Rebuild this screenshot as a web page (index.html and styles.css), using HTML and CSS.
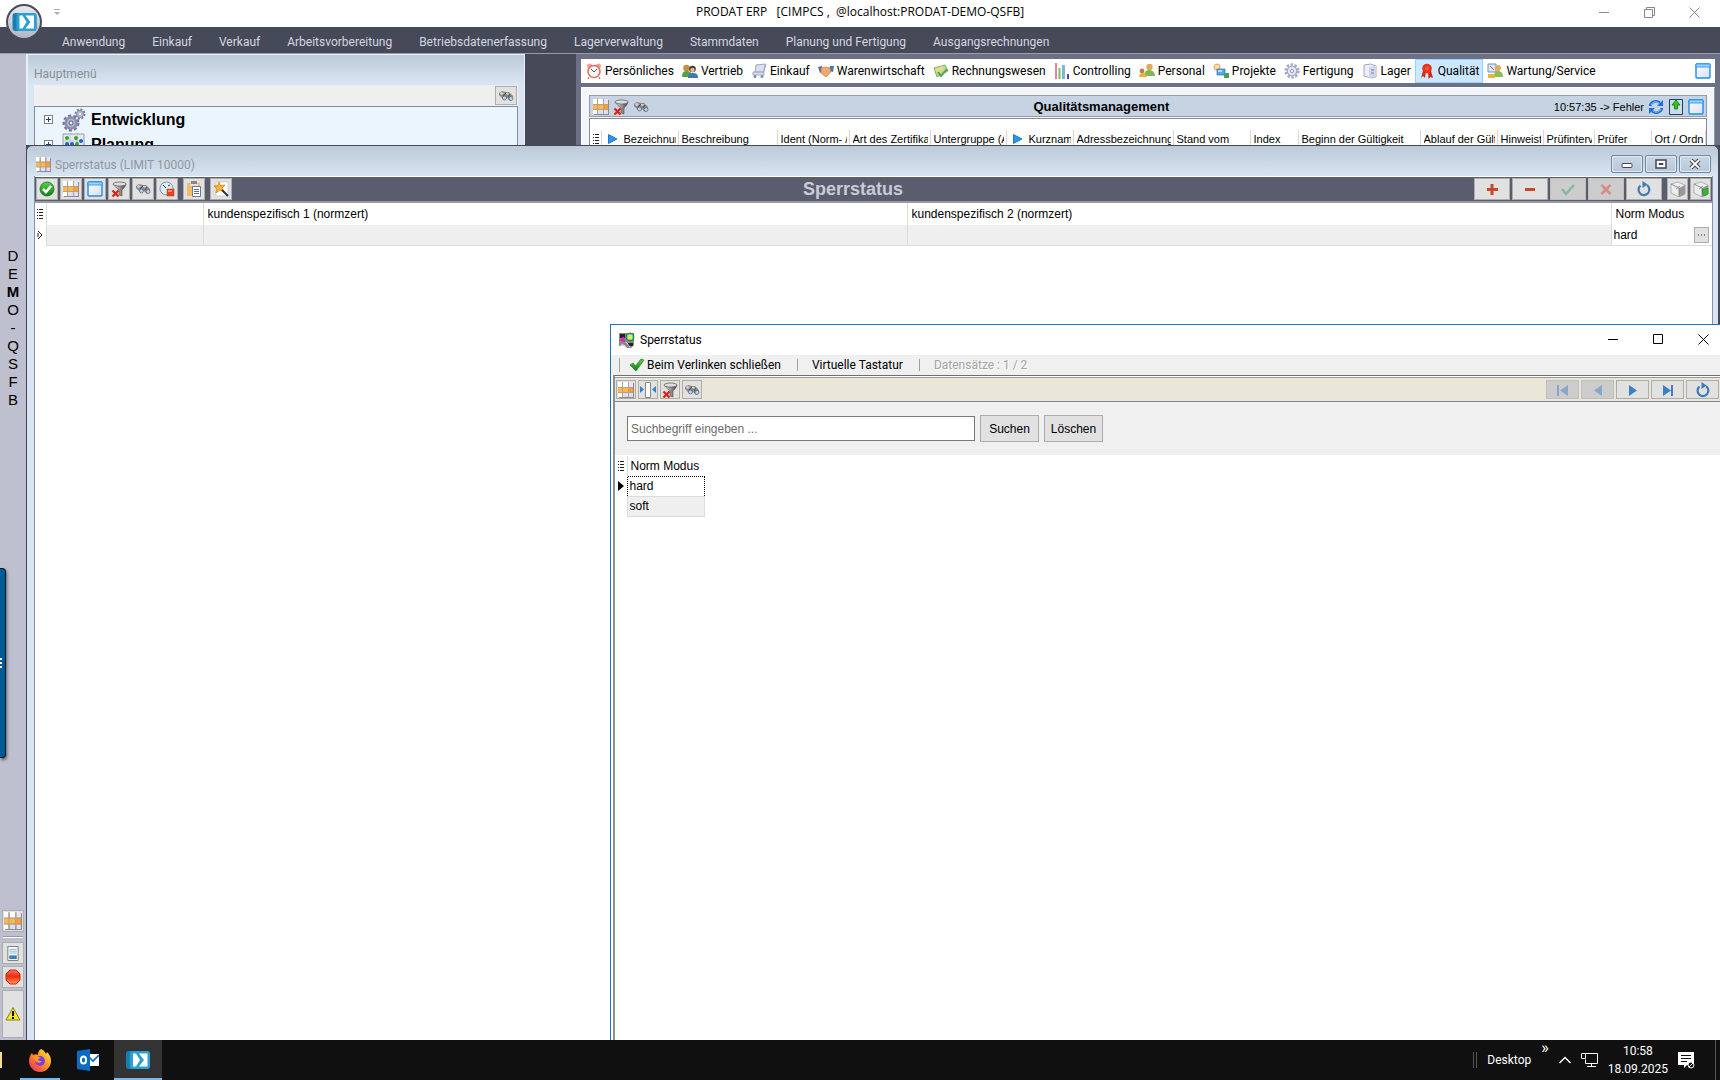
FILE: index.html
```html
<!DOCTYPE html>
<html lang="de">
<head>
  <meta charset="UTF-8">
  <title>PRODAT ERP</title>
  <link rel="stylesheet" href="styles.css">
</head>
<body>

  <!-- Icons -->
  <svg class="sprite" width="0" height="0" aria-hidden="true">
    <defs>
      <linearGradient id="g-green" x1="0" y1="0" x2="0" y2="1"><stop offset="0" stop-color="#5fd04c"/><stop offset="1" stop-color="#0b7d10"/></linearGradient>
      <linearGradient id="g-red" x1="0" y1="0" x2="0" y2="1"><stop offset="0" stop-color="#f77"/><stop offset=".45" stop-color="#f02a08"/><stop offset="1" stop-color="#ff9a70"/></linearGradient>
      <linearGradient id="g-win" x1="0" y1="0" x2="1" y2="1"><stop offset="0" stop-color="#fff"/><stop offset="1" stop-color="#d9dcfb"/></linearGradient>
      <linearGradient id="g-metal" x1="0" y1="0" x2="1" y2="0"><stop offset="0" stop-color="#eee"/><stop offset="1" stop-color="#444"/></linearGradient>
      <linearGradient id="g-fox" x1="1" y1="0" x2="0" y2="1"><stop offset="0" stop-color="#fff14a"/><stop offset=".5" stop-color="#ff8a1c"/><stop offset="1" stop-color="#f0206c"/></linearGradient>
    </defs>
    <symbol id="i-grid" viewBox="0 0 16 16">
      <path fill="#8d8a92" d="M1 1h15v15H1z"/>
      <path fill="#fff" d="M0 0h4v5H0zM5 0h5v5H5z"/><path fill="#e4e4fb" d="M11 0h4v5h-4z"/>
      <path fill="#ffb84d" d="M0 5h10v6H0z"/><path fill="#ff9d2e" d="M10 5h5v6h-5z"/>
      <path fill="#fff" d="M0 11h4v4H0z"/><path fill="#dedefa" d="M5 11h5v4H5zM11 11h4v4h-4z"/>
      <path fill="#b5a184" d="M0 5h15v1H0zM0 10h15v1H0zM4 0h1v15H4zM10 0h1v15h-1z"/>
    </symbol>
    <symbol id="i-filter" viewBox="0 0 16 16">
      <path fill="url(#g-metal)" stroke="#555" stroke-width=".6" d="M2 3c1 2 5 5 6 6v5l3 1V9c2-2 3-3 4-6z"/><ellipse cx="8.500" cy="3" rx="6.500" ry="2" fill="#ddd" stroke="#555" stroke-width=".7"/>
      <path stroke="#e2200c" stroke-width="2.200" d="M1.500 9.500l6 6M7.500 9.500l-6 6"/>
    </symbol>
    <symbol id="i-bino" viewBox="0 0 16 16">
      <path fill="#888" d="M1 5l3-2 4 1 3 0 4 4 0 3-3 2-3-3-3 2-3-3-2-2z"/><path fill="#d5d5d5" d="M3 4l3 1-2 2-2-1zM8 5l3 0-1 2-2-1z"/>
      <path stroke="#444" fill="none" stroke-width=".8" d="M5 8l3-3M10 9l2-3"/>
      <circle cx="6.500" cy="10" r="2" fill="#b5d3ee" stroke="#4c5864" stroke-width=".6"/><circle cx="13" cy="10.500" r="2" fill="#b5d3ee" stroke="#4c5864" stroke-width=".6"/>
    </symbol>
    <symbol id="i-window" viewBox="0 0 16 16">
      <rect x="1" y="1" width="14" height="14" rx="1" fill="url(#g-win)" stroke="#1a90ee" stroke-width="1.400"/><path fill="#9bd4fa" stroke="#1a90ee" stroke-width=".8" d="M1 1h14v3H1z"/>
    </symbol>
    <symbol id="i-ok" viewBox="0 0 16 16">
      <circle cx="8" cy="8" r="7" fill="url(#g-green)" stroke="#0a7a0f" stroke-width=".8"/><path fill="none" stroke="#fff" stroke-width="2.600" d="M4 8l3 3 5-6"/>
    </symbol>
    <symbol id="i-stop" viewBox="0 0 16 16">
      <circle cx="7.500" cy="7.500" r="6.500" fill="#dcecf8" stroke="#7b99b4"/><path stroke="#333" fill="none" d="M4 4l3 3M9 5l2-1"/><path fill="#e8461a" stroke="#b53a10" stroke-width=".5" d="M8 8h7v7H8z"/><path fill="#ff8d5e" d="M9 9h4v2H9z"/>
    </symbol>
    <symbol id="i-paste" viewBox="0 0 16 16">
      <path fill="#f2bd67" d="M1 2h13v13H1z"/><path fill="#e0e0e0" d="M4 3h8v2H4z"/><path fill="#888" d="M5 0h6v3H5z"/><path fill="#fff" stroke="#777" d="M6.500 5.500h8v10h-8z"/><path stroke="#4178ad" d="M8 8.500h5M8 10.500h5M8 12.500h5"/>
    </symbol>
    <symbol id="i-wand" viewBox="0 0 16 16">
      <path fill="#fff" stroke="#b9c4de" stroke-width=".7" d="M3 1h12v14H3z"/><path fill="#ffb52a" stroke="#d07508" stroke-width=".7" d="M6 1l1.500 3.500L12 4 9 7l2 4-4-2-4 3 1-4-3-3 4-.4z"/><path stroke="#333" stroke-width="2" d="M9 9l6 6"/>
    </symbol>
    <symbol id="i-plus" viewBox="0 0 16 16"><path stroke="#c9472b" stroke-width="3" d="M8 3v11M3 8.500h11"/></symbol>
    <symbol id="i-minus" viewBox="0 0 16 16"><path stroke="#c9472b" stroke-width="3" d="M3 8.500h10"/></symbol>
    <symbol id="i-check" viewBox="0 0 16 16"><path fill="none" stroke="#86b7a0" stroke-width="2.400" d="M2 8l4 5 8-9"/></symbol>
    <symbol id="i-cross" viewBox="0 0 16 16"><path stroke="#d78e82" stroke-width="2.600" d="M3.500 4l9 9M12.500 4l-9 9"/></symbol>
    <symbol id="i-reload" viewBox="0 0 16 16"><path fill="none" stroke="#3f7ab5" stroke-width="2.200" d="M11 4.200a5.400 5.400 0 1 1-6.500.3"/><path fill="#3f7ab5" d="M6.500 0l5 3.500-5 3.500z"/></symbol>
    <symbol id="i-box" viewBox="0 0 16 16"><path fill="#eee" stroke="#999" stroke-width=".7" d="M1 3l7-2 7 3v9l-6 3-8-4z"/><path fill="#999" d="M9 7l6-3v9l-6 3z"/><path fill="none" stroke="#777" stroke-width=".8" d="M1 3l8 4v9M6 8l4-3"/></symbol>
    <symbol id="i-first" viewBox="0 0 16 16"><path fill="currentColor" d="M2 3h2v11H2zM13 3v11L5 8.500z"/></symbol>
    <symbol id="i-prev" viewBox="0 0 16 16"><path fill="currentColor" d="M12 3v11L4 8.500z"/></symbol>
    <symbol id="i-next" viewBox="0 0 16 16"><path fill="currentColor" d="M4 3v11l8-5.500z"/></symbol>
    <symbol id="i-last" viewBox="0 0 16 16"><path fill="currentColor" d="M11 3h2v11h-2zM3 3v11l8-5.500z"/></symbol>
    <symbol id="i-fit" viewBox="0 0 16 16"><path fill="#fff" stroke="#888" d="M5.500.5h5v15h-5z"/><path fill="#3f7fc1" d="M0 4v7l4-3.500zM16 4v7l-4-3.500z"/></symbol>
    <symbol id="i-lines" viewBox="0 0 6 10"><path stroke="#222" d="M2 .5h4M2 3.500h4M2 6.500h4M2 9.500h4"/><path stroke="#222" d="M0 .5h1M0 3.500h1M0 6.500h1M0 9.500h1"/></symbol>
    <symbol id="i-clock" viewBox="0 0 16 16"><circle cx="3.500" cy="3" r="2.500" fill="#f0a195"/><circle cx="12.500" cy="3" r="2.500" fill="#f0a195"/><circle cx="8" cy="8.500" r="6" fill="#f5f8fb" stroke="#e4705a" stroke-width="1.600"/><path fill="none" stroke="#555" d="M5 6l3 3 3-3"/><path stroke="#c44" d="M3 14l-1 2M13 14l1 2"/></symbol>
    <symbol id="i-people" viewBox="0 0 16 16"><circle cx="4.500" cy="5" r="3.300" fill="#c78f45"/><path fill="#5aa044" d="M0 14c0-5 2-6 5-6s5 2 5 6z"/><circle cx="10.500" cy="6" r="3.300" fill="#453a35"/><circle cx="10.500" cy="7" r="2.200" fill="#eab67c"/><path fill="#3b78bd" d="M6 15c0-4 2-5 5-5s5 1 5 5z"/></symbol>
    <symbol id="i-cart" viewBox="0 0 16 16"><path fill="#dcdff0" stroke="#a3a7c0" d="M5 2l9-1-1 8H4zM2 9h11v3H2z"/><path stroke="#a3a7c0" d="M13 8l2-7"/><circle cx="4" cy="13.500" r="1.500" fill="#8589a2"/><circle cx="11" cy="13.500" r="1.500" fill="#8589a2"/></symbol>
    <symbol id="i-hands" viewBox="0 0 16 16"><path fill="#5c7085" d="M0 4l4-1 1 5-3 2z"/><path fill="#3f78c0" d="M16 3l-4 0-1 5 4 1z"/><path fill="#f0a970" stroke="#c0723d" stroke-width=".6" d="M3 5l4-1 5 1 1 4-5 5-5-4z"/></symbol>
    <symbol id="i-money" viewBox="0 0 16 16"><path fill="#b4dc92" stroke="#5c9a48" stroke-width=".7" d="M1 5l11-3 3 6-11 6z"/><path fill="#e9d98c" d="M2 6l7-3 2 3-7 4z"/><path stroke="#4da34b" stroke-width="1.800" fill="none" d="M5 9l3 4 6-7"/></symbol>
    <symbol id="i-bars" viewBox="0 0 16 16"><path stroke="#e88496" stroke-width="2" d="M2 0v16"/><path stroke="#6bc46b" stroke-width="2" d="M5.500 5v11"/><path stroke="#7fb8cf" stroke-width="3" d="M9.500 2v14"/><path stroke="#4a44c0" stroke-width="2" d="M14 11v5"/></symbol>
    <symbol id="i-person" viewBox="0 0 16 16"><circle cx="10.500" cy="4" r="3.200" fill="#e3aa5c"/><path fill="#7dba55" d="M5 13c0-4 2-6 5-6s6 2 6 6z"/><circle cx="3" cy="8" r="2.400" fill="#c47d3b"/><path fill="#e5b23a" d="M0 14c0-3 2-4 4-4s4 1 4 4z"/></symbol>
    <symbol id="i-project" viewBox="0 0 16 16"><circle cx="4" cy="4" r="3.500" fill="#f4a88b"/><path fill="#fbe48a" d="M2 2h4v4H2z"/><path fill="#58a8e8" stroke="#2c6eb4" stroke-width=".7" d="M4 6h8v6H4z"/><path fill="#4aa053" d="M11 10h5v5h-5z"/><path fill="#b3e0ff" d="M5 7h4v2H5z"/></symbol>
    <symbol id="i-gear" viewBox="0 0 16 16"><circle cx="8" cy="8" r="6.400" fill="none" stroke="#a9acc6" stroke-width="2.500" stroke-dasharray="2.500 1.500"/><circle cx="8" cy="8" r="4.800" fill="#e4e6f3" stroke="#a3a7c2" stroke-width="1.200"/><circle cx="8" cy="8" r="1.600" fill="#fff" stroke="#9295b0"/></symbol>
    <symbol id="i-store" viewBox="0 0 16 16"><path fill="#eeeffa" stroke="#a5a8c5" d="M2 2l7-1 5 2v11l-5 1-7-2z"/><path fill="#d2d5ea" d="M7 4l7-1v11l-7 1z"/><path stroke="#7c80a0" d="M9 7h3M9 10h3"/></symbol>
    <symbol id="i-ribbon" viewBox="0 0 16 16"><path fill="#cf2a12" d="M4 8h3l-1 7-2-2-2 2zM9 8h3l2 7-2.500-1L9.500 16z"/><circle cx="8" cy="5.500" r="4.800" fill="#e83317"/><circle cx="8" cy="5.500" r="2" fill="#f2593d"/></symbol>
    <symbol id="i-service" viewBox="0 0 16 16"><path fill="#d7e9f8" stroke="#6e93b8" d="M1 1h8v8H1z"/><path stroke="#d4453a" d="M3 3l4 4"/><circle cx="11" cy="5" r="3" fill="#e3aa5c"/><path fill="#8bbc59" d="M7 14c0-4 1-6 4-6s5 2 5 6z"/><path fill="#e8b43b" d="M1 11h7v4H1z"/></symbol>
    <symbol id="i-sync" viewBox="0 0 16 16"><path fill="none" stroke="#1b6fd8" stroke-width="2.600" d="M2 7a6 6 0 0 1 10-3M14 9a6 6 0 0 1-10 3"/><path fill="#1b6fd8" d="M15 1v6H9zM1 15V9h6z"/><path fill="none" stroke="#9bd0fb" stroke-width=".8" d="M3 6a5 5 0 0 1 8-2M13 10a5 5 0 0 1-8 2"/></symbol>
    <symbol id="i-up" viewBox="0 0 16 16"><path fill="#c8dfe5" stroke="#1c3f78" d="M1.500.5h13v15h-13z"/><path fill="#35c614" stroke="#0c720c" stroke-width=".8" d="M8 1l4 5H9.500v4h-3V6H4z"/></symbol>
    <symbol id="i-tri" viewBox="0 0 10 10"><path fill="#2297f5" stroke="#0e62bd" stroke-width=".8" d="M.5.5L9 5 .5 9.500z"/></symbol>
    <symbol id="i-gears" viewBox="0 0 24 24"><circle cx="9" cy="15" r="7" fill="none" stroke="#77789b" stroke-width="3" stroke-dasharray="3 2"/><circle cx="9" cy="15" r="5.500" fill="#b2b3cf" stroke="#8e8fb0" stroke-width="2.500"/><circle cx="9" cy="15" r="2" fill="#ebf5fe" stroke="#5d5e80"/><circle cx="18" cy="6" r="4.500" fill="none" stroke="#77789b" stroke-width="2" stroke-dasharray="2 1.500"/><circle cx="18" cy="6" r="3.600" fill="#b2b3cf" stroke="#8e8fb0"/><circle cx="18" cy="6" r="1.200" fill="#ebf5fe"/></symbol>
    <symbol id="i-plan" viewBox="0 0 24 24"><path fill="#e9e9f4" stroke="#9a9ab3" d="M1 1h21v21H1z"/><path stroke="#c2c2d5" d="M8 1v21M15 1v21M1 8h21M1 15h21"/><circle cx="5" cy="5" r="2" fill="#2eab22"/><circle cx="14" cy="5" r="2" fill="#2eab22"/><circle cx="19" cy="8" r="2" fill="#1c62c9"/><circle cx="5" cy="11" r="2" fill="#1c62c9"/><circle cx="10" cy="11" r="2" fill="#1c62c9"/><circle cx="15" cy="11" r="2" fill="#2eab22"/></symbol>
    <symbol id="i-prodat" viewBox="0 0 24 20"><rect x="0" y="1" width="24" height="18" rx="3" fill="#1680b4"/><rect x="4" y="1" width="20" height="18" rx="3" fill="#2ba0d2"/><path fill="#fff" d="M7 3.500h3l4 6.500-4 6.500H7zM13 3.500h8.500v13H13l5-6.500z"/></symbol>
    <symbol id="i-tick" viewBox="0 0 16 14"><path fill="url(#g-green)" stroke="#18861b" stroke-width=".7" d="M1 7l3-2 2.500 3L12 1l3 1-8 11z"/></symbol>
    <symbol id="i-app" viewBox="0 0 16 16"><path fill="#888" d="M0 1h15v12l-3 3H8l-3-3-5 1z"/><path fill="#222" d="M1 2h5v4H1zM9 11h5v3H9z"/><path stroke="#e21ec6" stroke-width="2" d="M1 8h4M4 5l1 5"/><circle cx="11" cy="5" r="4" fill="#35dfd4" stroke="#4a6b16"/><path fill="#e8ef3b" d="M9 3h4v4H9z"/><path stroke="#ddd" d="M7 10l4 5M2 12l4 2"/></symbol>
    <symbol id="i-doc" viewBox="0 0 16 16"><path fill="#fff" stroke="#777" d="M2.500.5h11v15h-11z"/><path stroke="#88aed0" d="M4 3.500h8M4 5.500h8M4 7.500h8"/><path fill="#3f7fb8" d="M4 10h8v4H4z"/></symbol>
    <symbol id="i-red" viewBox="0 0 16 16"><path fill="url(#g-red)" stroke="#d81d05" d="M5 1h6l4 4v6l-4 4H5l-4-4V5z"/></symbol>
    <symbol id="i-warn" viewBox="0 0 16 16"><path fill="#f3e72a" stroke="#8f7c1c" stroke-linejoin="round" d="M8 1.500l7 12.500H1z"/><path stroke="#111" stroke-width="2" d="M8 5v5M8 11v2"/></symbol>
  </svg>

  <header class="titlebar">
    <button class="quick" aria-label="Schnellzugriff"><svg width="6" height="6" viewBox="0 0 6 6"><path stroke="#aab" d="M0 .5h6"/><path fill="#aab" d="M0 3h6L3 6z"/></svg></button>
    <span class="caption">PRODAT ERP &nbsp; [CIMPCS , &nbsp;@localhost:PRODAT-DEMO-QSFB]</span>
    <div class="win-controls">
      <button aria-label="Minimieren"><svg width="11" height="11"><path stroke="#888" d="M0 5.500h10"/></svg></button>
      <button aria-label="Wiederherstellen"><svg width="11" height="11"><path fill="none" stroke="#888" d="M.5 2.500h8v8h-8zM2.500 2V.5h8v8H9"/></svg></button>
      <button aria-label="Schließen"><svg width="11" height="11"><path stroke="#888" d="M.5.5l10 10M10.500.5l-10 10"/></svg></button>
    </div>
    <button class="app-button" aria-label="PRODAT"><svg width="25" height="20"><use href="#i-prodat"/></svg></button>
  </header>

  <nav class="menubar">
    <a href="#">Anwendung</a>
    <a href="#">Einkauf</a>
    <a href="#">Verkauf</a>
    <a href="#">Arbeitsvorbereitung</a>
    <a href="#">Betriebsdatenerfassung</a>
    <a href="#">Lagerverwaltung</a>
    <a href="#">Stammdaten</a>
    <a href="#">Planung und Fertigung</a>
    <a href="#">Ausgangsrechnungen</a>
  </nav>

  <div class="workspace">
    <aside class="sidebar">
      <div class="mandant"><span>D</span><span>E</span><b>M</b><span>O</span><span>-</span><span>Q</span><span>S</span><span>F</span><span>B</span></div>
      <div class="side-tab"><i></i><i></i><i></i></div>
      <div class="side-buttons">
        <button aria-label="Tabelle"><svg width="18" height="18"><use href="#i-grid"/></svg></button>
        <hr>
        <button aria-label="Protokoll"><svg width="16" height="15"><use href="#i-doc"/></svg></button>
        <button aria-label="Stopp"><svg width="16" height="16"><use href="#i-red"/></svg></button>
        <button class="tall" aria-label="Warnungen"><svg width="16" height="16"><use href="#i-warn"/></svg></button>
      </div>
    </aside>

    <main class="desktop">
      <div class="backdrop">
        <section class="tree-window">
          <h2>Hauptmenü</h2>
          <div class="tree-search"><button aria-label="Suchen"><svg><use href="#i-bino"/></svg></button></div>
          <ul class="tree">
            <li><span class="expander"></span><svg width="24" height="24"><use href="#i-gears"/></svg>Entwicklung</li>
            <li><span class="expander"></span><svg width="24" height="24"><use href="#i-plan"/></svg>Planung</li>
          </ul>
        </section>

        <section class="modules">
          <nav class="module-bar">
            <a href="#"><svg><use href="#i-clock"/></svg>Persönliches</a>
            <a href="#"><svg><use href="#i-people"/></svg>Vertrieb</a>
            <a href="#"><svg><use href="#i-cart"/></svg>Einkauf</a>
            <a href="#"><svg><use href="#i-hands"/></svg>Warenwirtschaft</a>
            <a href="#"><svg><use href="#i-money"/></svg>Rechnungswesen</a>
            <a href="#"><svg><use href="#i-bars"/></svg>Controlling</a>
            <a href="#"><svg><use href="#i-person"/></svg>Personal</a>
            <a href="#"><svg><use href="#i-project"/></svg>Projekte</a>
            <a href="#"><svg><use href="#i-gear"/></svg>Fertigung</a>
            <a href="#"><svg><use href="#i-store"/></svg>Lager</a>
            <a href="#" class="active"><svg><use href="#i-ribbon"/></svg>Qualität</a>
            <a href="#"><svg><use href="#i-service"/></svg>Wartung/Service</a>
            <button aria-label="Fenster"><svg><use href="#i-window"/></svg></button>
          </nav>
          <div class="quality">
            <div class="quality-head">
              <div class="tools">
                <svg><use href="#i-grid"/></svg>
                <svg><use href="#i-filter"/></svg>
                <svg><use href="#i-bino"/></svg>
              </div>
              <h2>Qualitätsmanagement</h2>
              <div class="status">
                <span>10:57:35 -&gt; Fehler</span>
                <svg><use href="#i-sync"/></svg>
                <svg><use href="#i-up"/></svg>
                <svg><use href="#i-window"/></svg>
              </div>
            </div>
            <table class="quality-table">
              <colgroup>
                <col class="q-mark"><col class="q-name"><col class="q-desc"><col class="q-ident"><col class="q-type"><col class="q-group"><col class="q-short"><col class="q-addr"><col class="q-date"><col class="q-index"><col class="q-begin"><col class="q-end"><col class="q-note"><col class="q-interval"><col class="q-tester"><col>
              </colgroup>
              <thead>
                <tr>
                  <th class="mark"><svg width="6" height="10"><use href="#i-lines"/></svg></th>
                  <th><div><svg width="10" height="10"><use href="#i-tri"/></svg>Bezeichnung</div></th>
                  <th><div>Beschreibung</div></th>
                  <th><div>Ident (Norm- /</div></th>
                  <th><div>Art des Zertifikats</div></th>
                  <th><div>Untergruppe (Art)</div></th>
                  <th><div><svg width="10" height="10"><use href="#i-tri"/></svg>Kurzname</div></th>
                  <th><div>Adressbezeichnung</div></th>
                  <th><div>Stand vom</div></th>
                  <th><div>Index</div></th>
                  <th><div>Beginn der Gültigkeit</div></th>
                  <th><div>Ablauf der Gültigkeit</div></th>
                  <th><div>Hinweistext</div></th>
                  <th><div>Prüfintervall</div></th>
                  <th><div>Prüfer</div></th>
                  <th><div>Ort / Ordner</div></th>
                </tr>
              </thead>
            </table>
          </div>
        </section>
      </div>

      <section class="mdi-window">
        <header class="mdi-title">
          <svg width="15" height="15"><use href="#i-grid"/></svg>
          <h2>Sperrstatus (LIMIT 10000)</h2>
          <div class="mdi-controls">
            <button aria-label="Minimieren"><svg width="12" height="10"><rect x="1" y="4.500" width="10" height="4" rx="1" fill="#fff" stroke="#445"/></svg></button>
            <button aria-label="Maximieren"><svg width="12" height="10"><path fill="#fff" stroke="#445" stroke-width="1.500" d="M1 1h10v8H1z"/><path fill="none" stroke="#445" d="M4 4.500h4v1H4z"/></svg></button>
            <button aria-label="Schließen"><svg width="12" height="10"><path stroke="#445" stroke-width="4" d="M2 1l8 8M10 1L2 9"/><path stroke="#fff" stroke-width="1.800" d="M2 1l8 8M10 1L2 9"/></svg></button>
          </div>
        </header>
        <div class="mdi-body">
          <div class="mdi-toolbar">
            <div class="group">
              <button aria-label="Übernehmen"><svg><use href="#i-ok"/></svg></button>
              <button aria-label="Tabelle"><svg><use href="#i-grid"/></svg></button>
              <button aria-label="Fenster"><svg><use href="#i-window"/></svg></button>
              <button aria-label="Filter löschen"><svg><use href="#i-filter"/></svg></button>
              <button aria-label="Suchen"><svg><use href="#i-bino"/></svg></button>
              <button aria-label="Anhalten"><svg><use href="#i-stop"/></svg></button>
              <button class="apart" aria-label="Einfügen"><svg><use href="#i-paste"/></svg></button>
              <button class="apart" aria-label="Assistent"><svg><use href="#i-wand"/></svg></button>
            </div>
            <h1>Sperrstatus</h1>
            <div class="group">
              <button class="wide" aria-label="Neu"><svg><use href="#i-plus"/></svg></button>
              <button class="wide" aria-label="Löschen"><svg><use href="#i-minus"/></svg></button>
              <button class="wide" disabled aria-label="Speichern"><svg><use href="#i-check"/></svg></button>
              <button class="wide" disabled aria-label="Abbrechen"><svg><use href="#i-cross"/></svg></button>
              <button class="wide" aria-label="Aktualisieren"><svg><use href="#i-reload"/></svg></button>
              <button class="narrow apart" aria-label="Export"><svg><use href="#i-box"/></svg></button>
              <button class="narrow" aria-label="Export starten"><svg viewBox="0 0 16 16"><use href="#i-box"/><path fill="#3ab52f" stroke="#1d8a1c" stroke-width=".6" d="M9 9l6-2v6l-4 2z"/></svg></button>
            </div>
          </div>
          <table class="lock-table">
            <colgroup><col class="l-mark"><col class="l-first"><col><col><col class="l-mode"></colgroup>
            <thead>
              <tr>
                <th class="mark"><svg width="6" height="10"><use href="#i-lines"/></svg></th>
                <th></th>
                <th>kundenspezifisch 1 (normzert)</th>
                <th>kundenspezifisch 2 (normzert)</th>
                <th>Norm Modus</th>
              </tr>
            </thead>
            <tbody>
              <tr>
                <td class="mark"><svg width="6" height="10"><path fill="none" stroke="#222" d="M1 1l4 4-4 4M1 3v4"/></svg></td>
                <td></td>
                <td></td>
                <td></td>
                <td class="mode"><div><span>hard</span><button aria-label="Auswählen"><svg width="8" height="2"><path stroke="#222" d="M0 1h1M3 1h1M6 1h1"/></svg></button></div></td>
              </tr>
            </tbody>
          </table>
        </div>
      </section>

      <section class="dialog">
        <header class="dialog-title">
          <svg width="16" height="16"><use href="#i-app"/></svg>
          <h2>Sperrstatus</h2>
          <div class="win-controls">
            <button aria-label="Minimieren"><svg width="11" height="11"><path stroke="#000" d="M0 5.500h10"/></svg></button>
            <button aria-label="Maximieren"><svg width="11" height="11"><path fill="none" stroke="#000" d="M.5.5h9v9h-9z"/></svg></button>
            <button aria-label="Schließen"><svg width="11" height="11"><path stroke="#000" d="M.5.5l10 10M10.500.5l-10 10"/></svg></button>
          </div>
        </header>
        <div class="dialog-menu">
          <button class="link-close"><svg width="16" height="14"><use href="#i-tick"/></svg>Beim Verlinken schließen</button>
          <button>Virtuelle Tastatur</button>
          <span>Datensätze : 1 / 2</span>
        </div>
        <div class="dialog-body">
          <div class="dialog-toolbar">
            <button aria-label="Tabelle"><svg><use href="#i-grid"/></svg></button>
            <button aria-label="Spaltenbreite"><svg><use href="#i-fit"/></svg></button>
            <button aria-label="Filter löschen"><svg><use href="#i-filter"/></svg></button>
            <button aria-label="Suchen"><svg><use href="#i-bino"/></svg></button>
            <div class="pager">
              <button disabled aria-label="Erster"><svg><use href="#i-first"/></svg></button>
              <button disabled aria-label="Vorheriger"><svg><use href="#i-prev"/></svg></button>
              <button aria-label="Nächster"><svg><use href="#i-next"/></svg></button>
              <button aria-label="Letzter"><svg><use href="#i-last"/></svg></button>
              <button aria-label="Aktualisieren"><svg><use href="#i-reload"/></svg></button>
            </div>
          </div>
          <form class="search">
            <input type="text" aria-label="Suchbegriff" placeholder="Suchbegriff eingeben ...">
            <button type="button">Suchen</button>
            <button type="button">Löschen</button>
          </form>
          <table class="mode-table">
            <thead>
              <tr><th class="mark"><svg width="6" height="10"><use href="#i-lines"/></svg></th><th>Norm Modus</th></tr>
            </thead>
            <tbody>
              <tr class="selected"><td class="mark"><svg width="6" height="10"><path d="M0 0l6 5-6 5z"/></svg></td><td>hard</td></tr>
              <tr><td class="mark"></td><td>soft</td></tr>
            </tbody>
          </table>
        </div>
      </section>
    </main>
  </div>

  <footer class="taskbar">
    <div class="pinned">
      <i class="folder"></i>
      <button class="open" aria-label="Firefox"><svg width="24" height="24" viewBox="0 0 24 24"><path fill="url(#g-fox)" d="M13 1c3 1 4 3 5 5l1-2c3 3 4 6 4 9a11 11 0 0 1-22 0c0-3 1-6 3-8l1 2c2-1 4-1 5 0 0-3 1-5 3-6z"/><circle cx="12" cy="13" r="5" fill="#7a3fe0"/><path fill="#ff9a1f" d="M4 9c3-2 6-1 9 1-2 0-3 1-3 2 1 1 2 1 4 1-2 3-6 2-7-1z"/></svg></button>
      <button aria-label="Outlook"><svg width="22" height="22" viewBox="0 0 22 22"><path fill="#fff" d="M12 5h10v12H12z"/><path fill="none" stroke="#0a6cc4" stroke-width="1.600" d="M12 8l4 4 6-6"/><path fill="#0a6cc4" d="M0 2l13-2v22L0 20z"/><ellipse cx="6.500" cy="11" rx="2.600" ry="3.500" fill="none" stroke="#fff" stroke-width="2"/></svg></button>
      <button class="open current" aria-label="PRODAT"><svg width="24" height="20"><use href="#i-prodat"/></svg></button>
    </div>
    <div class="tray">
      <i class="grip"></i>
      <span class="desk">Desktop</span>
      <span class="more">»</span>
      <svg width="12" height="8" viewBox="0 0 12 8"><path fill="none" stroke="#fff" stroke-width="1.400" d="M.5 7L6 1.500 11.500 7"/></svg>
      <svg width="17" height="14" viewBox="0 0 17 14"><path fill="none" stroke="#fff" d="M4.500 2.500V.5h12v10h-12v-4M.5.5h4v5h-4zM10.500 10.500v3M6 13.500h9"/></svg>
      <div class="clock"><span>10:58</span><span>18.09.2025</span></div>
      <svg width="17" height="17" viewBox="0 0 17 17"><path fill="#fff" d="M0 0h16v13h-7l-3 3v-3H0z"/><path stroke="#101010" d="M3 3.500h10M3 6.500h10M3 9.500h6"/><circle cx="13" cy="13" r="3" fill="#101010" stroke="#fff"/><path stroke="#fff" d="M11 15l4-4"/></svg>
      <i class="show-desktop"></i>
    </div>
  </footer>

</body>
</html>
```
FILE: styles.css
```css
* {
  box-sizing: border-box;
}

body {
  margin: 0;
  height: 100vh;
  display: flex;
  flex-direction: column;
  overflow: hidden;
  background-color: #464957;
  font-family: Roboto, "Open Sans", sans-serif;
  font-size: 12px;
  line-height: 16px;
  color: #000;
}

h1, h2, ul {
  margin: 0;
  padding: 0;
}

h2 {
  font-size: 12px;
  font-weight: normal;
}

button {
  display: flex;
  align-items: center;
  justify-content: center;
  padding: 0;
  border: 1px solid #adadad;
  background-color: #e1e1e1;
  font: inherit;
  color: inherit;
}

a {
  color: inherit;
  text-decoration: none;
}

svg {
  flex: none;
  display: block;
  width: 16px;
  height: 16px;
}

svg[width] {
  width: auto;
  height: auto;
}

.sprite {
  position: absolute;
}

table {
  border-collapse: collapse;
  table-layout: fixed;
  font-family: "Liberation Sans", Arial, sans-serif;
}

th, td {
  padding: 0;
  font-weight: normal;
  text-align: left;
  white-space: nowrap;
  overflow: hidden;
}

.mark svg {
  margin: 0 auto;
}

/* Titelleiste */
.titlebar {
  position: relative;
  display: flex;
  align-items: center;
  justify-content: center;
  height: 27px;
  padding-bottom: 3px;
  background-color: #fff;
  font-family: "Open Sans", sans-serif;
}

.titlebar button,
.win-controls button {
  border: none;
  background: none;
}

.quick {
  position: absolute;
  left: 54px;
  top: 9px;
}

.win-controls {
  display: flex;
  gap: 34px;
  margin-left: auto;
}

.titlebar .win-controls {
  position: absolute;
  right: 20px;
}

.titlebar .app-button {
  position: absolute;
  z-index: 5;
  left: 6px;
  top: 4px;
  width: 36px;
  height: 36px;
  border: 2px solid #4b4d5c;
  border-radius: 50%;
  background: linear-gradient(#e8e8f0, #b4b5c6);
}

.menubar {
  display: flex;
  align-items: center;
  gap: 27px;
  height: 27px;
  padding: 3px 62px 0;
  border-bottom: 1px solid #9b9ba3;
  background-color: #464957;
  color: #d5d7e2;
}

/* Arbeitsbereich */
.workspace {
  flex: 1;
  display: flex;
  min-height: 0;
}

.sidebar {
  position: relative;
  display: flex;
  flex-direction: column;
  justify-content: space-between;
  width: 26px;
  padding: 193px 2px 2px;
  background-color: #bebfcf;
}

.mandant {
  display: flex;
  flex-direction: column;
  align-items: center;
  font-family: "Liberation Sans", Arial, sans-serif;
  font-size: 15px;
  line-height: 18px;
}

.side-tab {
  position: absolute;
  left: 0;
  top: 514px;
  display: flex;
  flex-direction: column;
  justify-content: center;
  gap: 2px;
  width: 6px;
  height: 190px;
  border: 1px solid #0a1a26;
  border-left: none;
  border-radius: 0 4px 4px 0;
  background-color: #005a96;
  box-shadow: 1px 2px 3px rgba(0, 0, 0, 0.5);
}

.side-tab i {
  width: 2px;
  height: 2px;
  background-color: #fff;
}

.side-buttons {
  display: flex;
  flex-direction: column;
  gap: 2px;
}

.side-buttons button {
  height: 22px;
}

.side-buttons .tall {
  height: 48px;
}

.side-buttons hr {
  width: 20px;
  height: 2px;
  margin: 2px auto;
  border: none;
  border-top: 1px solid #999;
  background-color: #fff;
}

.desktop {
  position: relative;
  flex: 1;
  min-width: 0;
  overflow: hidden;
}

.backdrop {
  display: flex;
  gap: 51px;
  height: 91px;
  overflow: hidden;
}

/* Hauptmenü */
.tree-window {
  width: 499px;
  padding: 0 6px;
  border: 1px solid #e9f0f8;
  border-width: 1px 1px 0 2px;
  background: linear-gradient(#bccad9, #dae6f3 30px);
}

.tree-window h2 {
  padding: 11px 0 3px;
  color: #8b9096;
}

.tree-search {
  display: flex;
  justify-content: flex-end;
  height: 21px;
  padding: 1px;
  background-color: #efefef;
}

.tree-search button {
  width: 22px;
}

.tree {
  height: 60px;
  border: 1px solid #848b99;
  background-color: #ebf5fe;
  list-style: none;
  font-family: "Liberation Sans", Arial, sans-serif;
  font-size: 16px;
  font-weight: bold;
}

.tree li {
  display: flex;
  align-items: center;
  height: 25px;
  padding-left: 9px;
}

.tree li svg {
  margin: 0 5px 0 9px;
}

.expander {
  width: 9px;
  height: 9px;
  border: 1px solid #808080;
  background: linear-gradient(#23408e, #23408e) center / 5px 1px no-repeat, linear-gradient(#23408e, #23408e) center / 1px 5px no-repeat, #fff;
}

/* Module */
.modules {
  flex: 1;
  min-width: 0;
  padding: 5px 5px 0;
  background-color: #6b7087;
}

.module-bar {
  display: flex;
  align-items: center;
  height: 24px;
  padding: 0 4px 0 1px;
  background-color: #fff;
}

.module-bar a {
  display: flex;
  align-items: center;
  gap: 3px;
  height: 24px;
  padding: 0 3px;
  border: 1px solid transparent;
  white-space: nowrap;
}

.module-bar .active {
  border-color: #99d1ff;
  background-color: #cce8ff;
}

.module-bar button {
  margin-left: auto;
  border: none;
  background: none;
}

.quality {
  margin-top: 4px;
  height: 60px;
  padding: 7px 7px 0;
  border: 1px solid #fff;
  border-right-color: #999;
  background-color: #f2f6fb;
}

.quality-head {
  display: flex;
  align-items: center;
  height: 22px;
  padding: 1px 2px 0 3px;
  border: 1px solid #9a9aa2;
  background-color: #c5d3e2;
  font-family: "Liberation Sans", Arial, sans-serif;
  font-size: 11px;
}

.quality-head h2 {
  flex: 1;
  font-size: 13px;
  font-weight: bold;
  text-align: center;
}

.tools, .status {
  display: flex;
  align-items: center;
  gap: 4px;
}

.quality-table {
  width: 100%;
  margin-top: 1px;
  border: 1px solid #8b8b94;
  background-color: #fff;
  font-size: 11px;
}

.quality-table th {
  height: 44px;
  padding: 12px 3px 0 3px;
  background: linear-gradient(#d8d8d8, #d8d8d8) right 11px / 1px 40px no-repeat;
  vertical-align: top;
}

.quality-table th div {
  overflow: hidden;
}

.quality-table th svg {
  display: inline-block;
  margin: 0 6px 0 3px;
  vertical-align: -1px;
}

.quality-table .mark svg {
  margin: 0;
}

.q-mark { width: 12px; }
.q-name { width: 77px; }
.q-desc { width: 99px; }
.q-ident { width: 72px; }
.q-type { width: 81px; }
.q-group { width: 76px; }
.q-short { width: 67px; }
.q-addr { width: 100px; }
.q-date { width: 77px; }
.q-index { width: 48px; }
.q-begin { width: 122px; }
.q-end { width: 77px; }
.q-note { width: 46px; }
.q-interval { width: 51px; }
.q-tester { width: 57px; }

/* Fenster Sperrstatus */
.mdi-window {
  position: absolute;
  inset: 91px 1px 0 0;
  display: flex;
  flex-direction: column;
  padding: 0 5px 0 7px;
  border: 1px solid #454854;
  border-bottom: none;
  border-radius: 6px 6px 0 0;
  background: linear-gradient(#bccad9, #d8e5f2 31px);
}

.mdi-title {
  display: flex;
  align-items: center;
  gap: 4px;
  height: 30px;
  padding: 7px 0 0 2px;
  color: #92979f;
}

.mdi-controls {
  display: flex;
  gap: 2px;
  margin: 0 2px 2px auto;
}

.mdi-controls button {
  width: 32px;
  height: 18px;
  border: 1px solid #75869c;
  border-radius: 2px;
  background: linear-gradient(#c8d6e5, #b9c9da);
  box-shadow: inset 0 0 0 1px #dfe9f3;
}

.mdi-body {
  flex: 1;
  border: 1px solid #8b919c;
  border-width: 0 1px;
  background-color: #fff;
}

.mdi-toolbar {
  display: flex;
  align-items: center;
  height: 27px;
  border: 1px solid #9a9aa2;
  border-width: 0 0 2px;
  border-top: 1px solid #fff;
  background-color: #5a5d6e;
}

.mdi-toolbar h1 {
  flex: 1;
  font-family: "Liberation Sans", Arial, sans-serif;
  font-size: 18px;
  text-align: center;
  color: #c9ccd8;
}

.group {
  display: flex;
  gap: 2px;
  padding: 0 1px;
}

.group button {
  width: 22px;
  height: 22px;
}

.group .wide {
  width: 36px;
}

.group .narrow {
  width: 21px;
}

.group .apart {
  margin-left: 3px;
}

button:disabled {
  border-color: #bfbfbf;
  background-color: #ccc;
}

.lock-table {
  width: 100%;
  font-size: 12px;
}

.lock-table th {
  height: 22px;
  padding-left: 4px;
  border-left: 1px solid #dcdcdc;
}

.lock-table td {
  height: 20px;
  border-left: 1px solid #dcdcdc;
  border-bottom: 1px solid #dcdcdc;
  background-color: #efefef;
}

.lock-table .mark {
  padding: 0;
  border: none;
  background: none;
}

.lock-table .mode {
  background-color: #fff;
}

.mode div {
  display: flex;
  align-items: center;
  justify-content: space-between;
  padding: 0 3px 0 2px;
}

.mode button {
  width: 15px;
  height: 16px;
}

.l-mark { width: 11px; }
.l-first { width: 157px; }
.l-mode { width: 101px; }

/* Auswahldialog */
.dialog {
  position: absolute;
  inset: 270px 0 0 584px;
  display: flex;
  flex-direction: column;
  border: 1px solid #1f73b7;
  border-width: 1px 0 0 1px;
  background-color: #fff;
}

.dialog-title {
  display: flex;
  align-items: center;
  gap: 5px;
  height: 30px;
  padding: 0 11px 1px 8px;
}

.dialog-menu {
  display: flex;
  align-items: center;
  gap: 16px;
  height: 20px;
  padding-left: 8px;
  background-color: #f0f0f0;
}

.dialog-menu > * {
  gap: 2px;
  padding-left: 14px;
  border: none;
  border-left: 1px solid #a0a0a0;
  background: none;
  line-height: 12px;
}

.dialog-menu .link-close {
  padding-left: 9px;
}

.dialog-menu span {
  color: #a3a3a3;
  text-shadow: 1px 1px #fff;
}

.dialog-body {
  flex: 1;
  margin-left: 2px;
  padding-top: 1px;
  border-left: 2px solid #8b8f96;
  border-top: 1px solid #6f6f6f;
}

.dialog-toolbar {
  display: flex;
  gap: 2px;
  height: 24px;
  padding: 2px 1px 2px 1px;
  border-top: 1px solid #999;
  background-color: #ebe7d8;
}

.dialog-toolbar button {
  width: 20px;
  height: 19px;
  color: #3f7fc1;
}

.pager {
  display: flex;
  gap: 2px;
  margin-left: auto;
}

.pager button {
  width: 33px;
}

.pager button:disabled {
  color: #8aa7c6;
}

.search {
  display: flex;
  align-items: center;
  gap: 5px;
  height: 54px;
  padding: 0 12px;
  border-top: 1px solid #7e858f;
  background-color: #f0f0f0;
  font-family: "Liberation Sans", Arial, sans-serif;
}

.search input {
  width: 348px;
  height: 25px;
  padding: 0 3px;
  border: 1px solid #7a7a7a;
  font: inherit;
}

.search input::placeholder {
  color: #6d6d6d;
}

.search button {
  width: 59px;
  height: 27px;
}

.mode-table {
  margin-top: 1px;
  font-size: 12px;
}

.mode-table th, .mode-table td {
  width: 77px;
  height: 20px;
  padding-left: 3px;
  border-left: 1px solid #dcdcdc;
}

.mode-table td {
  padding-left: 2px;
  border: 1px solid #dcdcdc;
  background-color: #efefef;
}

.mode-table .selected td {
  border: 1px dotted #000;
  background-color: #fff;
}

.mode-table .mark,
.mode-table .selected .mark {
  width: 12px;
  padding: 0;
  border: none;
  background: none;
}

/* Taskleiste */
.taskbar {
  display: flex;
  justify-content: space-between;
  height: 40px;
  background-color: #101010;
  color: #fff;
}

.pinned, .tray {
  display: flex;
  align-items: center;
}

.pinned button {
  width: 48px;
  height: 40px;
  border: none;
  background: none;
}

.pinned .folder {
  width: 2px;
  height: 16px;
  margin-right: 14px;
  background-color: #f5dc8a;
}

.pinned .open {
  background: linear-gradient(#76b9ed, #76b9ed) bottom / 40px 2px no-repeat;
}

.pinned .current {
  margin-left: 2px;
  background: linear-gradient(#76b9ed, #76b9ed) bottom / 48px 2px no-repeat, #333;
}

.tray {
  gap: 10px;
}

.grip {
  width: 4px;
  height: 16px;
  border: 1px solid #555;
  border-width: 0 1px;
}

.more {
  align-self: flex-start;
  font-size: 16px;
}

.clock {
  display: flex;
  flex-direction: column;
  align-items: center;
  line-height: 18px;
}

.show-desktop {
  height: 40px;
  width: 5px;
  margin-left: 10px;
  border-left: 1px solid #555;
}
```
